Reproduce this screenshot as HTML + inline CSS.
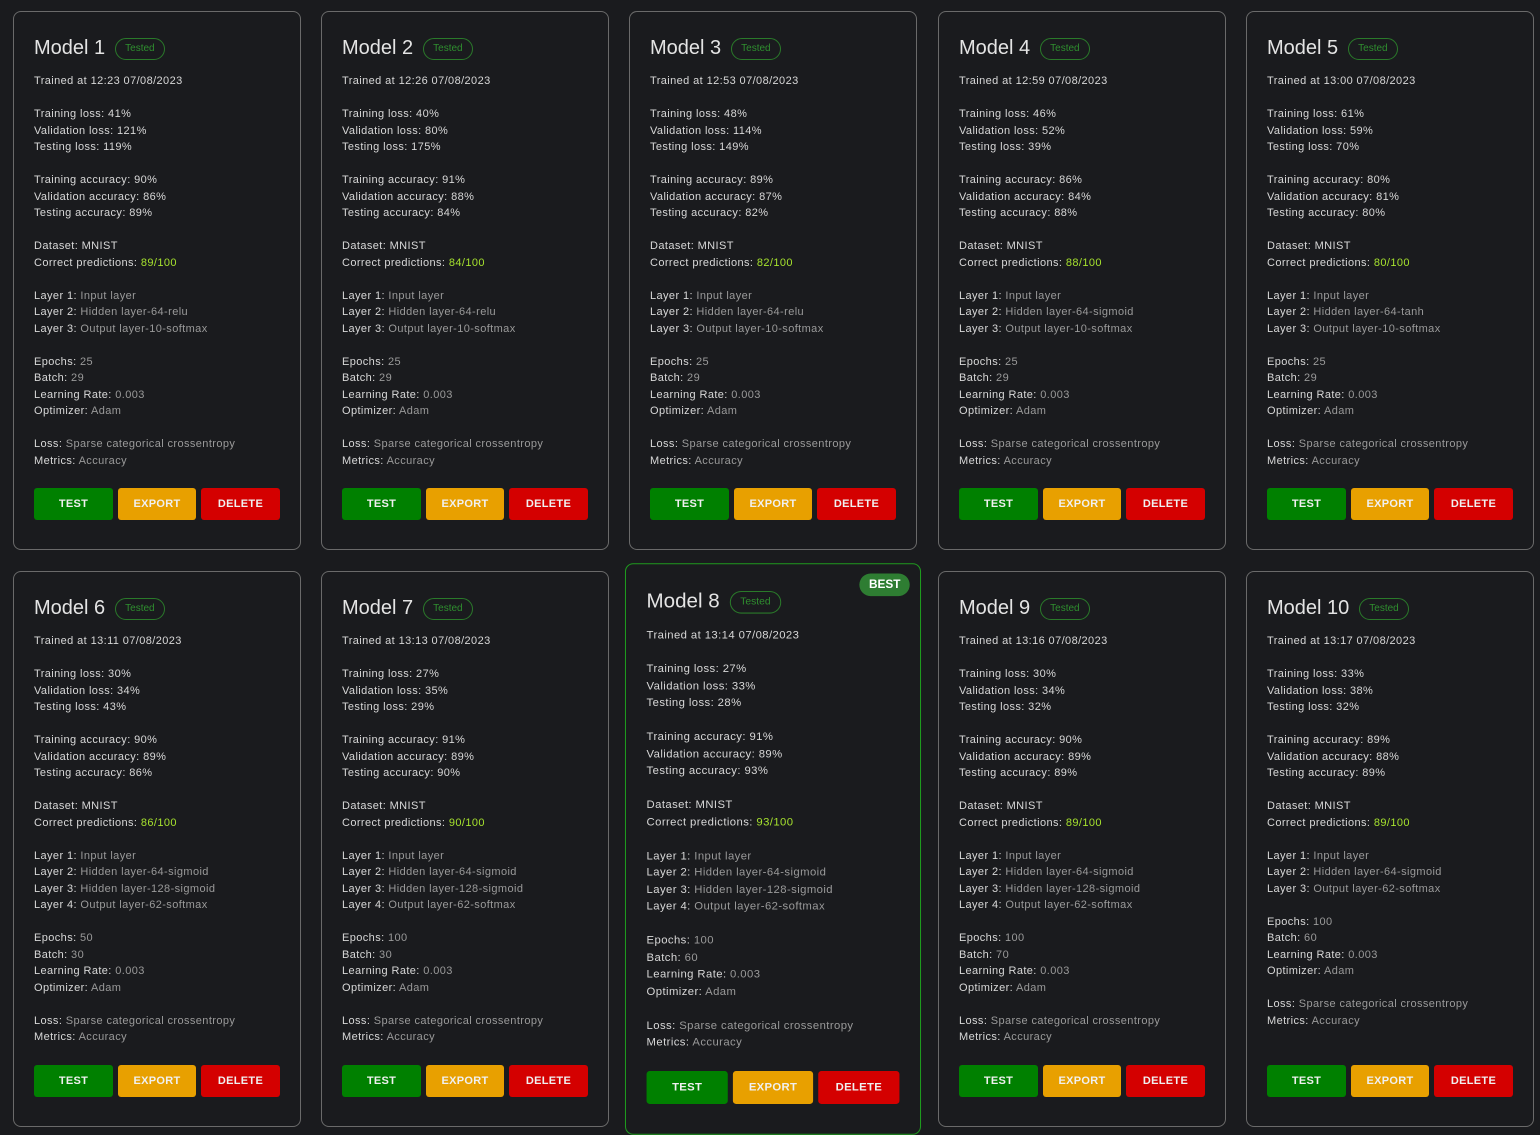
<!DOCTYPE html>
<html><head><meta charset="utf-8"><style>
*{box-sizing:border-box;margin:0;padding:0}
body{width:1540px;height:1132px;background:#1a1b1e;font-family:"Liberation Sans",sans-serif;overflow:hidden;position:relative}
.card{position:absolute;width:288px;border:1px solid #6a6a6a;border-radius:8px;background:#1a1b1e;padding:0 20px 30px 20px;display:flex;flex-direction:column}
.r1{top:11px;height:539px}.r2{top:571px;height:556px}
.hd{height:61px;display:flex;align-items:center;padding-top:12px}
.hd h2{font-weight:400;font-size:20px;color:#e4e4e4;letter-spacing:0px}
.tag{margin-left:10px;border:1px solid #2a7a2a;color:#2f8f2f;font-size:10px;border-radius:11px;padding:4px 9px;line-height:12px}
.tx{font-size:11px;line-height:16.5px;color:#d8d8d8;letter-spacing:.4px}
.tx .v{color:#9a9a9a}
.tx .g{color:#a6e22e}
.bt{margin-top:auto;display:flex;gap:5px;margin-bottom:-1px}
.bt div{height:32px;border-radius:3px;color:#f0f0f0;font-weight:700;font-size:11px;display:flex;align-items:center;justify-content:center;letter-spacing:.3px}
.t{width:79px;background:#008000}.e{width:78px;background:#e8a000}.d{width:79px;background:#d40000}
.best{border-color:#1f9a1f;transform:scale(1.028);transform-origin:center}
.bb{position:absolute;right:10px;top:9px;background:#2e7d32;color:#fff;font-weight:700;font-size:11.5px;border-radius:12px;padding:5px 9px}
</style></head><body>

<div class="card r1" style="left:13px"><div class="hd"><h2>Model 1</h2><span class="tag">Tested</span></div><div class="tx">Trained at 12:23 07/08/2023<br><br>Training loss: 41%<br>Validation loss: 121%<br>Testing loss: 119%<br><br>Training accuracy: 90%<br>Validation accuracy: 86%<br>Testing accuracy: 89%<br><br>Dataset: MNIST<br>Correct predictions: <span class="g">89/100</span><br><br>Layer 1: <span class="v">Input layer</span><br>Layer 2: <span class="v">Hidden layer-64-relu</span><br>Layer 3: <span class="v">Output layer-10-softmax</span><br><br>Epochs: <span class="v">25</span><br>Batch: <span class="v">29</span><br>Learning Rate: <span class="v">0.003</span><br>Optimizer: <span class="v">Adam</span><br><br>Loss: <span class="v">Sparse categorical crossentropy</span><br>Metrics: <span class="v">Accuracy</span></div><div class="bt"><div class="t">TEST</div><div class="e">EXPORT</div><div class="d">DELETE</div></div></div>

<div class="card r1" style="left:321px"><div class="hd"><h2>Model 2</h2><span class="tag">Tested</span></div><div class="tx">Trained at 12:26 07/08/2023<br><br>Training loss: 40%<br>Validation loss: 80%<br>Testing loss: 175%<br><br>Training accuracy: 91%<br>Validation accuracy: 88%<br>Testing accuracy: 84%<br><br>Dataset: MNIST<br>Correct predictions: <span class="g">84/100</span><br><br>Layer 1: <span class="v">Input layer</span><br>Layer 2: <span class="v">Hidden layer-64-relu</span><br>Layer 3: <span class="v">Output layer-10-softmax</span><br><br>Epochs: <span class="v">25</span><br>Batch: <span class="v">29</span><br>Learning Rate: <span class="v">0.003</span><br>Optimizer: <span class="v">Adam</span><br><br>Loss: <span class="v">Sparse categorical crossentropy</span><br>Metrics: <span class="v">Accuracy</span></div><div class="bt"><div class="t">TEST</div><div class="e">EXPORT</div><div class="d">DELETE</div></div></div>

<div class="card r1" style="left:629px"><div class="hd"><h2>Model 3</h2><span class="tag">Tested</span></div><div class="tx">Trained at 12:53 07/08/2023<br><br>Training loss: 48%<br>Validation loss: 114%<br>Testing loss: 149%<br><br>Training accuracy: 89%<br>Validation accuracy: 87%<br>Testing accuracy: 82%<br><br>Dataset: MNIST<br>Correct predictions: <span class="g">82/100</span><br><br>Layer 1: <span class="v">Input layer</span><br>Layer 2: <span class="v">Hidden layer-64-relu</span><br>Layer 3: <span class="v">Output layer-10-softmax</span><br><br>Epochs: <span class="v">25</span><br>Batch: <span class="v">29</span><br>Learning Rate: <span class="v">0.003</span><br>Optimizer: <span class="v">Adam</span><br><br>Loss: <span class="v">Sparse categorical crossentropy</span><br>Metrics: <span class="v">Accuracy</span></div><div class="bt"><div class="t">TEST</div><div class="e">EXPORT</div><div class="d">DELETE</div></div></div>

<div class="card r1" style="left:938px"><div class="hd"><h2>Model 4</h2><span class="tag">Tested</span></div><div class="tx">Trained at 12:59 07/08/2023<br><br>Training loss: 46%<br>Validation loss: 52%<br>Testing loss: 39%<br><br>Training accuracy: 86%<br>Validation accuracy: 84%<br>Testing accuracy: 88%<br><br>Dataset: MNIST<br>Correct predictions: <span class="g">88/100</span><br><br>Layer 1: <span class="v">Input layer</span><br>Layer 2: <span class="v">Hidden layer-64-sigmoid</span><br>Layer 3: <span class="v">Output layer-10-softmax</span><br><br>Epochs: <span class="v">25</span><br>Batch: <span class="v">29</span><br>Learning Rate: <span class="v">0.003</span><br>Optimizer: <span class="v">Adam</span><br><br>Loss: <span class="v">Sparse categorical crossentropy</span><br>Metrics: <span class="v">Accuracy</span></div><div class="bt"><div class="t">TEST</div><div class="e">EXPORT</div><div class="d">DELETE</div></div></div>

<div class="card r1" style="left:1246px"><div class="hd"><h2>Model 5</h2><span class="tag">Tested</span></div><div class="tx">Trained at 13:00 07/08/2023<br><br>Training loss: 61%<br>Validation loss: 59%<br>Testing loss: 70%<br><br>Training accuracy: 80%<br>Validation accuracy: 81%<br>Testing accuracy: 80%<br><br>Dataset: MNIST<br>Correct predictions: <span class="g">80/100</span><br><br>Layer 1: <span class="v">Input layer</span><br>Layer 2: <span class="v">Hidden layer-64-tanh</span><br>Layer 3: <span class="v">Output layer-10-softmax</span><br><br>Epochs: <span class="v">25</span><br>Batch: <span class="v">29</span><br>Learning Rate: <span class="v">0.003</span><br>Optimizer: <span class="v">Adam</span><br><br>Loss: <span class="v">Sparse categorical crossentropy</span><br>Metrics: <span class="v">Accuracy</span></div><div class="bt"><div class="t">TEST</div><div class="e">EXPORT</div><div class="d">DELETE</div></div></div>

<div class="card r2" style="left:13px"><div class="hd"><h2>Model 6</h2><span class="tag">Tested</span></div><div class="tx">Trained at 13:11 07/08/2023<br><br>Training loss: 30%<br>Validation loss: 34%<br>Testing loss: 43%<br><br>Training accuracy: 90%<br>Validation accuracy: 89%<br>Testing accuracy: 86%<br><br>Dataset: MNIST<br>Correct predictions: <span class="g">86/100</span><br><br>Layer 1: <span class="v">Input layer</span><br>Layer 2: <span class="v">Hidden layer-64-sigmoid</span><br>Layer 3: <span class="v">Hidden layer-128-sigmoid</span><br>Layer 4: <span class="v">Output layer-62-softmax</span><br><br>Epochs: <span class="v">50</span><br>Batch: <span class="v">30</span><br>Learning Rate: <span class="v">0.003</span><br>Optimizer: <span class="v">Adam</span><br><br>Loss: <span class="v">Sparse categorical crossentropy</span><br>Metrics: <span class="v">Accuracy</span></div><div class="bt"><div class="t">TEST</div><div class="e">EXPORT</div><div class="d">DELETE</div></div></div>

<div class="card r2" style="left:321px"><div class="hd"><h2>Model 7</h2><span class="tag">Tested</span></div><div class="tx">Trained at 13:13 07/08/2023<br><br>Training loss: 27%<br>Validation loss: 35%<br>Testing loss: 29%<br><br>Training accuracy: 91%<br>Validation accuracy: 89%<br>Testing accuracy: 90%<br><br>Dataset: MNIST<br>Correct predictions: <span class="g">90/100</span><br><br>Layer 1: <span class="v">Input layer</span><br>Layer 2: <span class="v">Hidden layer-64-sigmoid</span><br>Layer 3: <span class="v">Hidden layer-128-sigmoid</span><br>Layer 4: <span class="v">Output layer-62-softmax</span><br><br>Epochs: <span class="v">100</span><br>Batch: <span class="v">30</span><br>Learning Rate: <span class="v">0.003</span><br>Optimizer: <span class="v">Adam</span><br><br>Loss: <span class="v">Sparse categorical crossentropy</span><br>Metrics: <span class="v">Accuracy</span></div><div class="bt"><div class="t">TEST</div><div class="e">EXPORT</div><div class="d">DELETE</div></div></div>

<div class="card r2 best" style="left:629px"><span class="bb">BEST</span><div class="hd"><h2>Model 8</h2><span class="tag">Tested</span></div><div class="tx">Trained at 13:14 07/08/2023<br><br>Training loss: 27%<br>Validation loss: 33%<br>Testing loss: 28%<br><br>Training accuracy: 91%<br>Validation accuracy: 89%<br>Testing accuracy: 93%<br><br>Dataset: MNIST<br>Correct predictions: <span class="g">93/100</span><br><br>Layer 1: <span class="v">Input layer</span><br>Layer 2: <span class="v">Hidden layer-64-sigmoid</span><br>Layer 3: <span class="v">Hidden layer-128-sigmoid</span><br>Layer 4: <span class="v">Output layer-62-softmax</span><br><br>Epochs: <span class="v">100</span><br>Batch: <span class="v">60</span><br>Learning Rate: <span class="v">0.003</span><br>Optimizer: <span class="v">Adam</span><br><br>Loss: <span class="v">Sparse categorical crossentropy</span><br>Metrics: <span class="v">Accuracy</span></div><div class="bt"><div class="t">TEST</div><div class="e">EXPORT</div><div class="d">DELETE</div></div></div>

<div class="card r2" style="left:938px"><div class="hd"><h2>Model 9</h2><span class="tag">Tested</span></div><div class="tx">Trained at 13:16 07/08/2023<br><br>Training loss: 30%<br>Validation loss: 34%<br>Testing loss: 32%<br><br>Training accuracy: 90%<br>Validation accuracy: 89%<br>Testing accuracy: 89%<br><br>Dataset: MNIST<br>Correct predictions: <span class="g">89/100</span><br><br>Layer 1: <span class="v">Input layer</span><br>Layer 2: <span class="v">Hidden layer-64-sigmoid</span><br>Layer 3: <span class="v">Hidden layer-128-sigmoid</span><br>Layer 4: <span class="v">Output layer-62-softmax</span><br><br>Epochs: <span class="v">100</span><br>Batch: <span class="v">70</span><br>Learning Rate: <span class="v">0.003</span><br>Optimizer: <span class="v">Adam</span><br><br>Loss: <span class="v">Sparse categorical crossentropy</span><br>Metrics: <span class="v">Accuracy</span></div><div class="bt"><div class="t">TEST</div><div class="e">EXPORT</div><div class="d">DELETE</div></div></div>

<div class="card r2" style="left:1246px"><div class="hd"><h2>Model 10</h2><span class="tag">Tested</span></div><div class="tx">Trained at 13:17 07/08/2023<br><br>Training loss: 33%<br>Validation loss: 38%<br>Testing loss: 32%<br><br>Training accuracy: 89%<br>Validation accuracy: 88%<br>Testing accuracy: 89%<br><br>Dataset: MNIST<br>Correct predictions: <span class="g">89/100</span><br><br>Layer 1: <span class="v">Input layer</span><br>Layer 2: <span class="v">Hidden layer-64-sigmoid</span><br>Layer 3: <span class="v">Output layer-62-softmax</span><br><br>Epochs: <span class="v">100</span><br>Batch: <span class="v">60</span><br>Learning Rate: <span class="v">0.003</span><br>Optimizer: <span class="v">Adam</span><br><br>Loss: <span class="v">Sparse categorical crossentropy</span><br>Metrics: <span class="v">Accuracy</span></div><div class="bt"><div class="t">TEST</div><div class="e">EXPORT</div><div class="d">DELETE</div></div></div>

</body></html>
